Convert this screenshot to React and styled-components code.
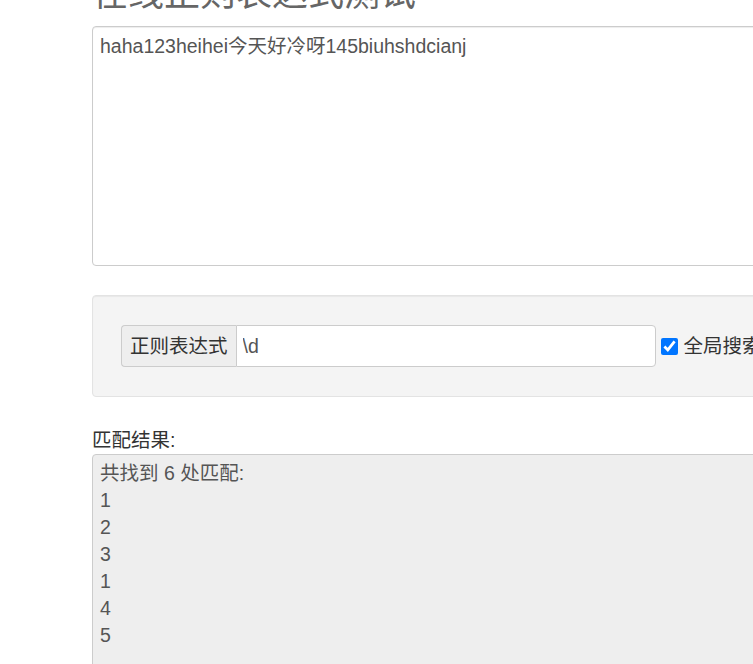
import { createGlobalStyle } from "styled-components";
import styled from "styled-components";

const GlobalStyle = createGlobalStyle`
  html, body {
    margin: 0;
    padding: 0;
    background: #fff;
    overflow: hidden;
  }
  body {
    font-family: "Liberation Sans", "Noto Sans CJK SC", sans-serif;
    font-size: 19.5px;
    line-height: 27px;
    color: #333;
  }
  * {
    box-sizing: border-box;
  }
`;

function App() {
  const matches = ["1", "2", "3", "1", "4", "5"];

  return (
    <>
      <GlobalStyle />
      <Page>
        <Title>在线正则表达式测试</Title>
        <SourceText
          defaultValue="haha123heihei今天好冷呀145biuhshdcianj"
          spellCheck={false}
        />

        <Well>
          <InputGroup>
            <Addon>正则表达式</Addon>
            <PatternInput defaultValue="\d" spellCheck={false} />
          </InputGroup>
          <CheckLabel>
            <Check type="checkbox" defaultChecked />
            全局搜索
          </CheckLabel>
        </Well>

        <ResultLabel>匹配结果:</ResultLabel>
        <ResultBox>
          <div>共找到 {matches.length} 处匹配:</div>
          {matches.map((m, i) => (
            <div key={i}>{m}</div>
          ))}
        </ResultBox>
      </Page>
    </>
  );
}

const Page = styled.div`
  width: 1000px;
  margin-left: 92px;
  margin-top: -26px;
`;

const Title = styled.h1`
  margin: 0 0 12px;
  font-size: 36px;
  line-height: 40px;
  font-weight: 400;
  color: #666;
`;

const SourceText = styled.textarea`
  display: block;
  width: 100%;
  height: 240px;
  padding: 6px 7px;
  border: 1px solid #ccc;
  border-radius: 4px;
  font-family: inherit;
  font-size: 19.5px;
  line-height: 27px;
  color: #555;
  resize: none;
  outline: none;
  box-shadow: inset 0 1px 1px rgba(0, 0, 0, 0.075);
`;

const Well = styled.div`
  display: flex;
  align-items: center;
  gap: 5px;
  margin-top: 29px;
  padding: 29px 28px;
  background: #f4f4f4;
  border: 1px solid #e3e3e3;
  border-radius: 4px;
  box-shadow: inset 0 1px 1px rgba(0, 0, 0, 0.05);
`;

const InputGroup = styled.div`
  display: flex;
  height: 42px;
`;

const Addon = styled.span`
  display: flex;
  align-items: center;
  padding: 0 8px;
  background: #eee;
  border: 1px solid #ccc;
  border-right: 0;
  border-radius: 4px 0 0 4px;
  color: #333;
`;

const PatternInput = styled.input`
  width: 420px;
  height: 100%;
  padding: 0 6px;
  border: 1px solid #ccc;
  border-radius: 0 4px 4px 0;
  font-family: inherit;
  font-size: 19.5px;
  color: #555;
  outline: none;
`;

const CheckLabel = styled.label`
  display: flex;
  align-items: center;
  gap: 6px;
  color: #333;
  white-space: nowrap;
`;

const Check = styled.input`
  width: 17px;
  height: 17px;
  margin: 0;
  accent-color: #0075ff;
`;

const ResultLabel = styled.div`
  margin-top: 30px;
  color: #333;
`;

const ResultBox = styled.div`
  min-height: 300px;
  padding: 5px 7px;
  background: #eee;
  border: 1px solid #ccc;
  border-radius: 4px;
  color: #555;
  line-height: 27px;
`;

export default App;
